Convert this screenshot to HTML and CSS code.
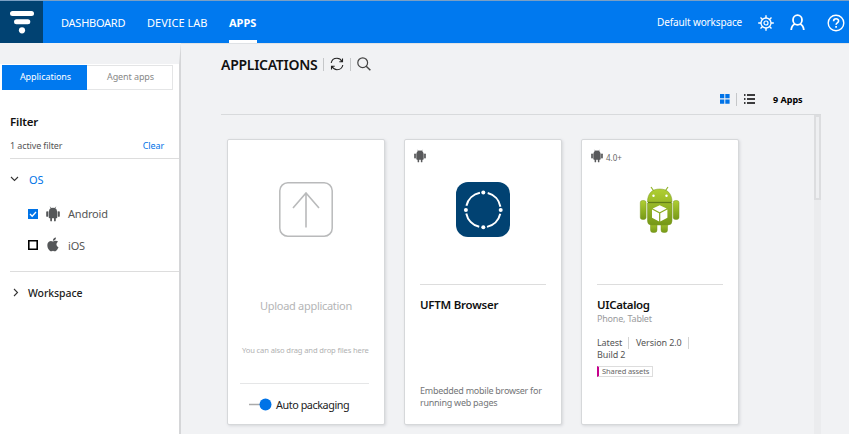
FILE: index.html
```html
<!DOCTYPE html>
<html lang="en">
<head>
<meta charset="utf-8">
<title>Applications</title>
<link rel="stylesheet" href="styles.css">
</head>
<body>
<svg class="defs" width="0" height="0">
  <symbol id="android" viewBox="0 0 14 16">
    <path d="M3 5.2C3 2.8 4.700 1.700 7 1.700s4 1.100 4 3.500zM2.700 5.200h8.600v6.100q0 1-1 1H3.700q-1 0-1-1z"/>
    <rect x=".2" y="5.200" width="2" height="5.600" rx=".9"/>
    <rect x="11.800" y="5.200" width="2" height="5.600" rx=".9"/>
    <rect x="4.200" y="11" width="1.800" height="4.400" rx=".8"/>
    <rect x="8" y="11" width="1.800" height="4.400" rx=".8"/>
    <path d="M4.200.8l1 1.500M9.800.8l-1 1.500" stroke="currentColor" stroke-width=".7"/>
  </symbol>
</svg>
<header class="topbar">
  <div class="logo">
    <svg width="43" height="42" viewBox="0 0 43 42" fill="#fff">
      <rect x="10" y="10" width="24" height="5" rx="2.5"/>
      <rect x="14" y="18.2" width="16.300" height="5" rx="2.5"/>
      <circle cx="22" cy="29.300" r="3.100"/>
    </svg>
  </div>
  <nav class="nav">
    <a class="nav-dash">DASHBOARD</a>
    <a class="nav-lab">DEVICE LAB</a>
    <a class="nav-apps">APPS</a>
  </nav>
  <span class="workspace">Default workspace</span>
  <svg class="gear" width="16" height="16" viewBox="0 0 16 16" fill="none" stroke="#fff">
    <circle cx="8" cy="8" r="5" stroke-width="1.300"/>
    <circle cx="8" cy="8" r="2" stroke-width="1.200"/>
    <path d="M8 .2v2.800M8 13v2.800M.2 8H3M13 8h2.800M2.500 2.500l2 2M11.500 11.500l2 2M13.500 2.500l-2 2M4.500 11.500l-2 2" stroke-width="1.400"/>
  </svg>
  <svg class="user" width="15" height="17" viewBox="0 0 15 17" fill="none" stroke="#fff" stroke-width="1.800">
    <ellipse cx="7.500" cy="6" rx="4.500" ry="4.800"/>
    <path d="M1.200 16c.2-3.400 1.600-5.100 3.800-6M13.800 16c-.2-3.400-1.600-5.100-3.800-6"/>
  </svg>
  <svg class="help" width="18" height="18" viewBox="0 0 18 18" fill="none" stroke="#fff">
    <circle cx="9" cy="9" r="7.800" stroke-width="1.400"/>
    <path d="M6.600 7.200c0-3.300 5-3.200 5-.2 0 1.900-2.500 1.900-2.500 3.700" stroke-width="1.600"/>
    <path d="M9.100 12v1.700" stroke-width="1.700"/>
  </svg>
</header>
<div class="layout">
  <aside class="sidebar">
    <div class="tabs"><span class="tab active">Applications</span><span class="tab">Agent apps</span></div>
    <h2 class="filter-title">Filter</h2>
    <div class="filter-info"><span class="count">1 active filter</span><a class="clear">Clear</a></div>
    <div class="group os">
      <svg width="9" height="6" viewBox="0 0 9 6" fill="none" stroke="#333" stroke-width="1.100"><path d="M1 1l3.500 3.500L8 1"/></svg>
      <span>OS</span>
    </div>
    <div class="option">
      <svg width="10" height="10" viewBox="0 0 10 10"><path fill="#0073e7" d="M0 0h10v10H0z"/><path d="M2 5l2.200 2.200L8 3" fill="none" stroke="#fff" stroke-width="1.300"/></svg>
      <svg class="os-icon" width="14" height="16" fill="currentColor"><use href="#android"/></svg>
      <span>Android</span>
    </div>
    <div class="option ios">
      <svg width="10" height="10" viewBox="0 0 10 10"><path d="M.8.800h8.400v8.400H.8z" fill="none" stroke="#000" stroke-width="1.600"/></svg>
      <svg class="os-icon" width="14" height="16" viewBox="0 0 14 16" fill="currentColor"><path d="M7 4.500C5.500 3.900 4.500 3.700 3.200 4.500.7 6 1 10 2.700 12.500c1.300 1.900 2.200 2.300 4.300 1.300 2.100 1 3.100.5 4.300-1.300.6-.9.9-1.500 1.200-2.300-2.600-1.200-2.700-4-.4-5.400-1.300-1.500-3.300-1.100-5.100-.3zM6.900 3.700C6.800 2 8.200.8 10 .6c0 1.900-1.300 3.200-3.100 3.100z"/></svg>
      <span>iOS</span>
    </div>
    <div class="group space">
      <svg width="6" height="9" viewBox="0 0 6 9" fill="none" stroke="#333" stroke-width="1.100"><path d="M1 1l3.500 3.500L1 8"/></svg>
      <span>Workspace</span>
    </div>
  </aside>
  <main class="main">
    <div class="heading">
      <h1>APPLICATIONS</h1>
      <i class="sep"></i>
      <svg width="14" height="14" viewBox="0 0 14 14" fill="none" stroke="#222" stroke-width="1.100"><path d="M1.200 6C1.700 3 4 1.300 7 1.300c2.200 0 4 1.300 5 3.200M12.500 1.500v3.300H9.300M12.800 8c-.5 3-2.800 4.700-5.800 4.700-2.200 0-4-1.300-5-3.200M1.500 12.500V9.200h3.200"/></svg>
      <i class="sep"></i>
      <svg width="14" height="14" viewBox="0 0 14 14" fill="none" stroke="#444" stroke-width="1.200"><circle cx="5.700" cy="5.700" r="4.900"/><path d="M9.200 9.200l4.200 4" stroke-width="1.500"/></svg>
    </div>
    <div class="toolbar">
      <svg width="10" height="10" viewBox="0 0 10 10" fill="#0073e7"><path d="M0 0h4.300v4.300H0zM5.300 0h4.300v4.300H5.300zM0 5.500h4.300v4.300H0zM5.300 5.500h4.300v4.300H5.300z"/></svg>
      <i class="sep"></i>
      <svg width="11" height="10" viewBox="0 0 11 10"><path d="M0 1h1.500M3 1h8M0 5h1.500M3 5h8M0 9h1.500M3 9h8" stroke="#000" stroke-width="1.500"/></svg>
      <strong>9 Apps</strong>
    </div>
    <div class="scroller">
      <div class="cards">
        <section class="card upload">
          <svg class="upload-icon" width="54" height="55" viewBox="0 0 54 55" fill="none" stroke="#b9babb"><rect x=".8" y=".8" width="52.400" height="53.400" rx="8" stroke-width="1.500"/><path d="M27 45.500V11M14 26l13-15 13 15" stroke-width="1.600"/></svg>
          <div class="upload-title">Upload application</div>
          <div class="drag">You can also drag and drop files here</div>
          <div class="packaging">
            <svg width="24" height="13" viewBox="0 0 24 13"><path d="M0 6.500h14" stroke="#aaa" stroke-width="1.500"/><circle cx="16.500" cy="6.500" r="6" fill="#0073e7"/></svg>
            <span>Auto packaging</span>
          </div>
        </section>
        <section class="card app">
          <div class="platform"><svg width="12" height="14" fill="currentColor"><use href="#android"/></svg></div>
          <svg class="app-icon" width="54" height="55" viewBox="0 0 54 55"><rect width="54" height="55" rx="12" fill="#014272"/><circle cx="27.300" cy="27.900" r="17.400" fill="none" stroke="#fff" stroke-width="2" stroke-dasharray="19.330 8" stroke-dashoffset="-4"/><g fill="#fff"><circle cx="27.300" cy="10.500" r="2"/><circle cx="27.300" cy="45.300" r="2"/><circle cx="9.900" cy="27.900" r="2"/><circle cx="44.700" cy="27.900" r="2"/></g></svg>
          <h3>UFTM Browser</h3>
          <p class="description">Embedded mobile browser for<br>running web pages</p>
        </section>
        <section class="card app">
          <div class="platform"><svg width="12" height="14" fill="currentColor"><use href="#android"/></svg><span>4.0+</span></div>
          <svg class="app-icon" width="54" height="55" viewBox="0 0 54 55">
            <defs><linearGradient id="green" x2="0" y2="1"><stop stop-color="#b0cf32"/><stop offset="1" stop-color="#769817"/></linearGradient></defs>
            <g fill="url(#green)" stroke="#799722" stroke-width=".5">
              <path d="M18 5l3.500 5M35 5l-3.500 5" stroke="#92b52d" stroke-width="1.200"/>
              <rect x="17.500" y="39" width="6.500" height="11.500" rx="2.500"/><rect x="28" y="39" width="6.500" height="11.500" rx="2.500"/>
              <rect x="7.300" y="18.500" width="5.800" height="19" rx="2.200"/><rect x="40.200" y="18.500" width="5.800" height="19" rx="2.200"/>
              <path d="M14.500 20C14.500 11.500 19 7 26.700 7S39 11.500 39 20zM14.500 21H39v18q0 4-4 4H18.500q-4 0-4-4z"/>
            </g>
            <path d="M15 20.500h23.500" stroke="#617d18"/>
            <circle cx="20.500" cy="13.800" r="1.200" fill="#fff"/><circle cx="33.500" cy="13.800" r="1.200" fill="#fff"/>
            <path d="M26.700 23.300l7 3.200-7 3.700-7-3.700zM19 27.600l7.100 3.700v8.200L19 35.700zM34.400 27.600l-7.100 3.700v8.200l7.100-3.800z" fill="#fff"/>
          </svg>
          <h3 class="catalog">UICatalog</h3>
          <div class="devices">Phone, Tablet</div>
          <div class="version"><span class="latest">Latest</span><span class="number">Version 2.0</span></div>
          <div class="build">Build 2</div>
          <span class="tag">Shared assets</span>
        </section>
      </div>
      <div class="track"><div class="thumb"></div></div>
    </div>
  </main>
</div>
</body>
</html>
```
FILE: styles.css
```css
* { box-sizing: border-box; }
body { margin: 0; width: 849px; height: 434px; overflow: hidden; background: #f1f2f4; color: #222; font: 10px "Noto Sans", sans-serif; }
svg { display: block; flex: none; }
.defs { position: absolute; }
h1, h2, h3, p { margin: 0; }
h1, h2, h3 { color: #111; font-weight: 600; }
span, a, strong { white-space: nowrap; }

.topbar { display: flex; align-items: center; height: 43px; border-top: 1px solid #7a9fc4; background: #0079ef; color: #fff; }
.logo { width: 43px; height: 42px; background: #014272; }
.nav { display: flex; height: 42px; padding-left: 18px; font-size: 11px; line-height: 43px; }
.nav-dash { width: 86px; letter-spacing: -.25px; }
.nav-lab { width: 82px; }
.nav-apps { width: 28px; border-bottom: 3px solid #fff; font-weight: 700; }
.workspace { width: 101px; margin-left: 400px; font-size: 10px; letter-spacing: -.13px; }
.gear { margin-top: 2px; }
.user { margin: 1px 0 0 16px; }
.help { margin: 2px 0 0 22px; }

.layout { display: flex; height: 391px; }
.sidebar { width: 181px; border-top: 21px solid #f1f2f4; border-right: 2px solid #d5d6d8; background: #fff; padding-top: 1px; }
.tabs { display: flex; width: 171px; height: 25px; margin-left: 2px; border: 1px solid #e4e5e6; color: #888; font-size: 9px; line-height: 22px; letter-spacing: -.1px; text-align: center; }
.tab { flex: 1; padding-left: 2px; }
.tab.active { margin: -1px 0 -1px -1px; background: #0079ef; color: #fff; line-height: 24px; letter-spacing: -.04px; }
.filter-title { margin: 24px 0 0 10px; font-size: 11.500px; line-height: 16px; letter-spacing: -.15px; }
.filter-info { display: flex; justify-content: space-between; height: 29px; margin-left: 10px; padding: 7px 15px 0 0; border-bottom: 1px solid #ddd; color: #555; font-size: 9px; line-height: 17px; letter-spacing: -.12px; }
.clear { color: #0073e7; }
.group { display: flex; align-items: center; }
.os { height: 40px; padding-left: 10px; gap: 10px; color: #0073e7; font-size: 11px; }
.option { display: flex; align-items: center; height: 32px; padding-left: 28px; color: #555; font-size: 11px; letter-spacing: -.2px; }
.os + .option { height: 29px; }
.ios { height: 34px; }
.os-icon { margin: 0 8px 0 8px; color: #555759; }
.space { height: 42px; margin: 9px 0 0 10px; padding-left: 3px; gap: 9px; border-top: 1px solid #ddd; font-size: 10.500px; font-weight: 500; letter-spacing: -.08px; }

.main { flex: 1; padding-left: 40px; border-top: 1px solid #dfe2e5; }
.heading { display: flex; align-items: center; height: 40px; }
.heading h1 { width: 102px; font-size: 14px; letter-spacing: -.28px; white-space: nowrap; }
.sep { width: 1px; height: 13px; background: #c5c7c9; }
.heading svg { margin: 0 6px; }
.toolbar { display: flex; align-items: center; width: 600px; height: 30px; padding-left: 499px; }
.toolbar .sep { margin: 0 7px 0 6px; }
.toolbar strong { margin-left: 18px; color: #000; font-size: 9px; }
.scroller { display: flex; justify-content: space-between; width: 600px; height: 320px; border-top: 1px solid #d8dadc; }
.cards { display: flex; gap: 19px; padding: 24px 0 0 6px; }
.card { width: 158px; height: 286px; border: 1px solid #d6d8da; border-radius: 2px; background: #fff; box-shadow: 1px 1px 3px #d5d7da; }
.upload-icon { margin: 42px auto 0 51px; }
.upload-title { margin-top: 60px; color: #b4b5b6; font-size: 11px; line-height: 18px; letter-spacing: -.3px; text-align: center; }
.drag { height: 42px; margin: 27px 15px 0 12px; padding: 2px 0 0 2px; border-bottom: 1px solid #e5e6e7; color: #b0b1b2; font-size: 7.600px; line-height: 12px; letter-spacing: -.14px; white-space: nowrap; }
.packaging { display: flex; align-items: center; height: 40px; padding-left: 21px; gap: 3px; font-size: 10.800px; letter-spacing: -.43px; }
.app { padding-left: 15px; }
.platform { display: flex; height: 28px; margin-left: -6px; padding-top: 9px; gap: 3px; color: #666; font-size: 8px; line-height: 17px; }
.platform svg { color: #58595b; }
.app-icon { margin: 14px 0 0 36px; }
.app h3 { width: 126px; margin-top: 47px; padding-top: 11px; border-top: 1px solid #ddd; font-size: 11.500px; line-height: 18px; letter-spacing: -.25px; }
.app .catalog { letter-spacing: -.35px; }
.description { margin-top: 71px; color: #747678; font-size: 9px; line-height: 12px; letter-spacing: -.26px; white-space: nowrap; }
.devices { color: #9a9b9d; font-size: 9px; line-height: 10px; letter-spacing: -.2px; }
.version { display: flex; height: 12px; margin-top: 13px; color: #555; font-size: 9px; line-height: 12px; letter-spacing: -.1px; }
.latest { width: 32px; border-right: 1px solid #d4d4d4; }
.number { width: 60px; padding-left: 7px; border-right: 1px solid #d4d4d4; }
.build { color: #555; font-size: 9px; line-height: 12px; letter-spacing: -.1px; }
.tag { display: block; width: 56px; height: 11px; margin-top: 5px; padding-left: 3px; border: 1px solid #ddd; border-left: 2px solid #c6008c; color: #666; font-size: 7.500px; line-height: 9px; letter-spacing: -.1px; }
.track { width: 7px; background: #ebecee; }
.thumb { height: 85px; border: 2px solid #dcdddf; background: #eeeff1; }
```
